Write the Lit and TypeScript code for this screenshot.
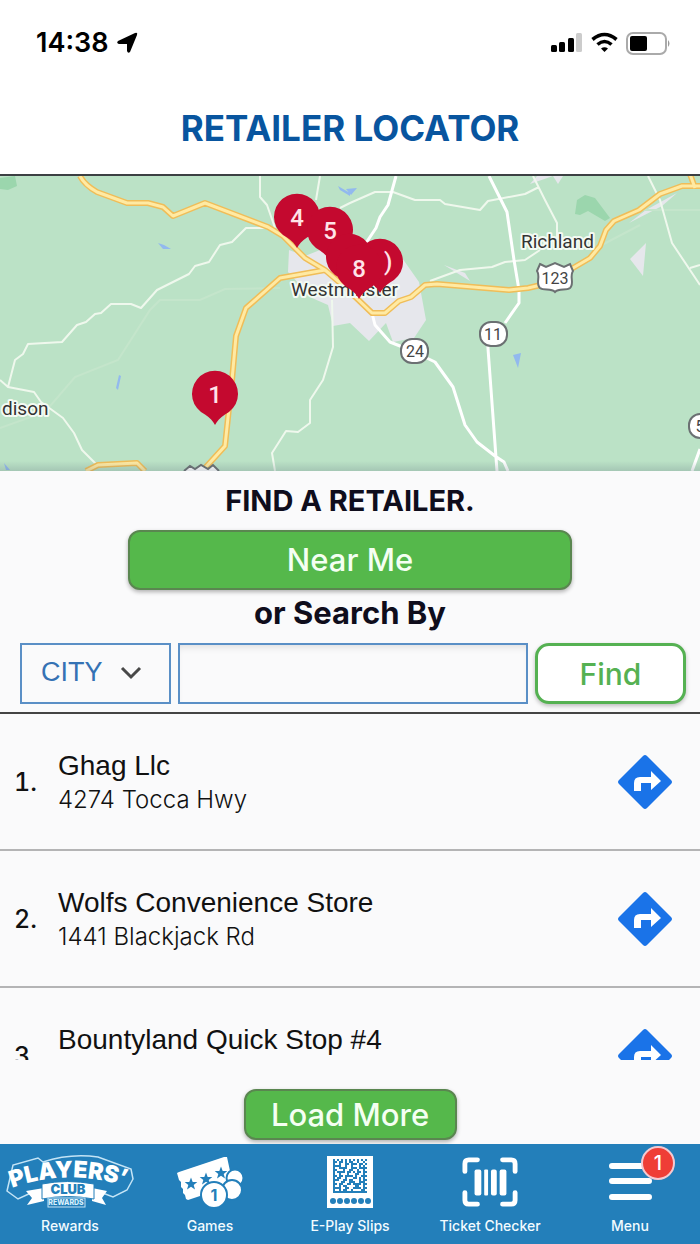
import { LitElement, html, css, svg } from "lit";
import { customElement } from "lit/decorators.js";

const stores = [
  { name: "Ghag Llc", address: "4274 Tocca Hwy" },
  { name: "Wolfs Convenience Store", address: "1441 Blackjack Rd" },
  { name: "Bountyland Quick Stop #4", address: "" },
];

const slipRows = [
  "10101010101010101",
  "11011010110010010",
  "10010011011101101",
  "11110010010001010",
  "10011110011101111",
  "11000100110010010",
  "10111101101011011",
  "10010001000110010",
  "11011011110100111",
  "10110010001101010",
  "11100110110001011",
  "10001100111001110",
  "11011001101111011",
  "10010110000110010",
  "11110011001111011",
  "10010110010000110",
  "11111111111111111",
];

const star = "M0-6.500 1.700-2 6.300-1.900 2.700.900 4 5.400 0 2.800-4 5.400-2.700.900-6.300-1.900-1.700-2Z";
const pinShape = "M0 31C-2 27-5 24-10 20.500A23 23 0 1 1 10 20.500C5 24 2 27 0 31Z";

const pin = (x: number, y: number, label: string) => svg`
  <g transform="translate(${x} ${y})">
    <path class="pin" d=${pinShape} />
    ${label ? svg`<text class="pin-label" y="9" text-anchor="middle">${label}</text>` : null}
  </g>`;

@customElement("app-map")
class AppMap extends LitElement {
  static styles = css`
    :host { display: block; background: #bbe2c6; overflow: hidden; }
    svg { display: block; width: 100%; height: 295px; }
    text { font-family: Roboto, "Liberation Sans", sans-serif; }
    .minor { fill: none; stroke: #eff8ed; stroke-width: 2; stroke-linejoin: round; }
    .faint { fill: none; stroke: #c4e5cb; stroke-width: 2; }
    .major { fill: none; stroke: #fff; stroke-width: 3; stroke-linejoin: round; }
    .casing { fill: none; stroke: #f0bd58; stroke-width: 6; stroke-linejoin: round; }
    .road { fill: none; stroke: #ffeaa3; stroke-width: 3; stroke-linejoin: round; }
    .town { fill: #e6e7ec; }
    .water { fill: #92b9ee; }
    .park { fill: #9bd6ad; }
    .place { font-size: 19px; fill: #333; stroke: #f3faf3; stroke-width: 4; stroke-linejoin: round; paint-order: stroke; }
    .shield { fill: #fff; stroke: #6b7072; stroke-width: 2; }
    .route { font-size: 16px; fill: #444; text-anchor: middle; }
    .pin { fill: #c4092f; }
    .pin-label { font-size: 24px; fill: #ffe3e8; font-weight: 500; }
    .shade { fill: url(#edge); }
  `;

  render() {
    const highways = [
      "M80 176C84 184 90 188 97 192L127 203H148L163 207 173 216 205 203 268 227 283 236 305 258 325 270 345 287 372 313H385L399 301 411 297 425 285 437 284 509 290 528 288 545 284 573 268 590 258 600 246 606 230 614 221 639 210 660 194 682 186H702",
      "M325 270 280 278 246 308 236 336 232 380 225 446 205 468",
      "M86 471 98 465 137 463 145 471",
      "M690 174 695 188",
    ];
    return html`
      <svg viewBox="0 176 700 295" preserveAspectRatio="xMidYMid slice" role="img" aria-label="Map of retailers">
        <defs>
          <linearGradient id="edge" x1="0" y1="0" x2="0" y2="1">
            <stop offset="0" stop-color="#567" stop-opacity="0" />
            <stop offset="1" stop-color="#567" stop-opacity=".22" />
          </linearGradient>
        </defs>
        <path class="park" d="M0 178 15 176 17 186 8 190 0 189ZM577 200 585 195 595 198 610 218 605 221 588 211 580 215 575 214Z" />
        <path class="town" d="M289 250 305 256 325 248 350 240 400 255 419 282 426 320 414 338 393 342 386 323 369 341 350 323 333 326 328 305 312 298 288 272Z
          M444 265 465 273 470 281ZM629 223 646 210 677 193 662 206ZM630 259 646 243 643 276ZM537 176H563L558 184 553 176 530 184Z" />
        <path class="water" d="M158 243 164 245 171 249 163 249ZM119 375 121 376 118 390 116 388ZM338 186 350 193V196L340 190ZM346 189 357 188 351 195ZM513 355 521 353 518 368ZM4 463 10 470H6Z" />
        <path class="faint" d="M0 428 45 412 75 377 118 360 150 310 160 300 200 300 225 289 280 288M640 210 700 210M600 246 640 225" />
        <path class="minor" d="M0 380 8 387 34 392 41 402 63 418 74 433 82 450 98 466M8 387 15 360 23 354 28 344 62 342 77 325 86 322 95 314 101 313 111 304H131L141 308 157 290 189 274 195 266 209 262 220 245 232 242 246 228H265
          M260 176V197L267 205 275 228M320 176 316 200M340 208 350 203 375 192H393L415 200H440L445 204 480 210 488 201 525 194 539 187M533 176 545 200 557 223V240M648 176 660 200 672 243 700 285M690 268 700 265M430 281 460 270 492 267 505 262 525 260 540 250
          M332 300 333 347 323 380 310 400V423L298 432 286 431 272 453 275 471" />
        <path class="major" d="M396 176 388 205 380 217 376 228 366 243M489 176 507 212 514 260 519 290V303L505 323M487 335 497 471M372 313 375 325 390 342 410 350 435 362 453 387 465 425 477 442 495 456 504 462 508 471M700 449 692 471" />
        ${highways.map((d) => svg`<path class="casing" d=${d} />`)}
        ${highways.map((d) => svg`<path class="road" d=${d} />`)}
        <text class="place" x="521" y="248">Richland</text>
        <text class="place" x="291" y="296">Westminster</text>
        <text class="place" x="2" y="415">dison</text>
        <g class="shield">
          <path d="M540 264 546 267 555 263 564 267 570 264 573 271C569 277 575 283 570 288 566 291 559 288 555 292 551 288 544 291 540 288 535 283 541 277 537 271Z" />
          <path d="M184 471 190 466 195 469 201 465 208 469 213 465 219 471" />
          <rect x="401" y="339" width="27" height="24" rx="11" />
          <rect x="480" y="322" width="27" height="24" rx="11" />
          <rect x="689" y="414" width="27" height="24" rx="11" />
        </g>
        <text class="route" x="555" y="284">123</text>
        <text class="route" x="415" y="357">24</text>
        <text class="route" x="493" y="340">11</text>
        <text class="route" x="700" y="432">5</text>
        <rect class="shade" x="0" y="461" width="700" height="10" />
        ${pin(297, 217, "4")}
        ${pin(330, 230, "5")}
        ${pin(349, 257, "")}
        ${pin(380, 262, "")}
        <text class="pin-label" x="384" y="270">)</text>
        ${pin(359, 268, "8")}
        ${pin(215, 394, "1")}
      </svg>`;
  }
}

@customElement("app-root")
class AppRoot extends LitElement {
  static styles = css`
    :host {
      display: flex; flex-direction: column; height: 100vh; overflow: hidden;
      background: #fafafb; color: #0f0d1c; font-family: Inter, "Liberation Sans", sans-serif;
    }
    * { box-sizing: border-box; }
    svg { display: block; overflow: visible; }
    button, input, select { font: inherit; margin: 0; cursor: pointer; }
    .top { background: #fff; border-bottom: 2px solid #3c4043; height: 176px; flex: none; }
    .status { display: flex; justify-content: space-between; align-items: center; padding: 28px 29px 0 36px; }
    .clock { display: flex; align-items: center; gap: 8px; font-size: 27px; line-height: 30px; font-weight: 600; color: #000; }
    .signals { display: flex; align-items: center; gap: 8px; }
    .title { margin: 50px 0 0; text-align: center; font-size: 35px; line-height: 40px; font-weight: 700; color: #08559f; }
    .map { flex: none; }
    .search { flex: none; display: flex; flex-direction: column; align-items: center; border-bottom: 2px solid #444; padding: 12px 0 8px; }
    .lead { margin: 0; font-size: 29px; line-height: 36px; font-weight: 700; }
    .or { font-size: 31px; }
    .primary {
      background: #55b84b; color: #f4fff2; border: 2px solid #5a8650; border-radius: 12px;
      box-shadow: 0 2px 4px rgba(0, 0, 0, .3); font-size: 31px; line-height: 36px; font-weight: 500;
    }
    .near { width: 444px; max-width: 90%; height: 60px; margin: 11px 0 5px; }
    .form { align-self: stretch; display: flex; gap: 7px; margin-top: 12px; padding: 0 14px 0 20px; }
    .pick { position: relative; width: 151px; flex: none; }
    .select {
      appearance: none; width: 100%; height: 61px; border: 2px solid #5a8fc6; border-radius: 0; background: #fafafb;
      color: #3572b4; padding: 0 0 4px 19px; font-family: "Liberation Sans", sans-serif; font-size: 27px;
    }
    .chevron { position: absolute; right: 29px; top: 23px; pointer-events: none; }
    .query { flex: 1; min-width: 0; height: 61px; border: 2px solid #5a8fc6; background: #fafafb; box-shadow: inset 0 6px 8px -5px rgba(0, 0, 0, .14); padding: 0 12px; font-size: 26px; }
    .find {
      width: 151px; flex: none; height: 61px; border: 3px solid #55b152; border-radius: 14px; background: #fff;
      color: #55b152; font-size: 30px; font-weight: 500; box-shadow: 0 2px 4px rgba(0, 0, 0, .25);
    }
    .list { flex: 1; min-height: 0; margin: 0; padding: 0; list-style: none; overflow-y: auto; scrollbar-width: none; }
    .row { display: flex; align-items: center; height: 137px; border-bottom: 2px solid #b4b4b5; padding: 0 28px 0 14px; color: #111; }
    .num { width: 44px; font-size: 25px; font-weight: 500; font-variant-numeric: tabular-nums; }
    .info { flex: 1; display: flex; flex-direction: column; gap: 2px; }
    .name { font-family: "Liberation Sans", sans-serif; font-size: 28px; line-height: 34px; }
    .address { font-size: 24px; line-height: 30px; min-height: 30px; font-weight: 300; }
    .more { flex: none; display: flex; justify-content: center; padding: 29px 0 4px; }
    .load { width: 213px; height: 51px; }
    .nav { flex: none; display: grid; grid-template-columns: repeat(5, 1fr); height: 100px; background: #237fba; }
    .tab { display: flex; flex-direction: column; align-items: center; justify-content: space-between; padding: 12px 0 8px; color: #f2fbff; text-decoration: none; font-size: 14px; line-height: 20px; font-weight: 500; }
    .badge-text { font-size: 20px; font-weight: 500; fill: #fff; }
    .ball { font-size: 16px; font-weight: 700; fill: #237fba; }
    .logo-word { font-size: 23px; font-weight: 900; fill: #fff; }
    .logo-club { font-size: 13px; font-weight: 900; fill: #237fba; }
    .logo-small { font-size: 7px; font-weight: 800; fill: #d8f0fc; }
  `;

  rewards() {
    return html`<svg width="130" height="52" viewBox="7 1156 130 52" aria-hidden="true">
      <path d="M35 1192 20 1199 9 1191 15 1165 40 1158 45 1162Q72 1153 100 1157L133 1169 135 1179 129 1190 115 1197 102 1192" fill="none" stroke="#c4e4f6" stroke-width="1.500" />
      <path id="arc" d="M14 1188Q70 1167 134 1188" fill="none" />
      <text class="logo-word"><textPath href="#arc">PLAYERS’</textPath></text>
      <path d="M28 1191 46 1188V1201L29 1205 34 1198ZM109 1191 94 1188V1201L108 1205 104 1198Z" fill="#fff" />
      <path d="M44 1184Q69 1179 96 1184V1199Q69 1194 44 1199Z" fill="#fff" stroke="#237fba" />
      <text class="logo-club" x="70" y="1194" text-anchor="middle">CLUB</text>
      <rect x="50" y="1198" width="37" height="9" fill="#237fba" stroke="#c4e4f6" />
      <text class="logo-small" x="68" y="1205" text-anchor="middle">REWARDS</text>
    </svg>`;
  }

  games() {
    return html`<svg width="68" height="52" viewBox="177 1156 68 52" aria-hidden="true">
      <path d="M178 1173 180 1172 225 1157 228 1157 234 1185 189 1200 187 1199 186 1195 184 1193 184 1189 182 1187 182 1182 180 1180Z" fill="#fff" />
      <g fill="#237fba"><path transform="translate(192 1184)" d=${star} /><path transform="translate(207 1179)" d=${star} /><path transform="translate(222 1173)" d=${star} /></g>
      <g fill="#fff" stroke="#237fba" stroke-width="2"><circle cx="236" cy="1178" r="8.500" /><circle cx="233" cy="1190" r="10" /><circle cx="215" cy="1195" r="13" /></g>
      <text class="ball" x="215" y="1201" text-anchor="middle">1</text>
    </svg>`;
  }

  slips() {
    return html`<svg width="46" height="52" viewBox="0 0 46 52" aria-hidden="true">
      <path d="M0 0H46V52H0Z" fill="#fff" />
      <g fill="#237fba" transform="translate(6 3)">
        ${slipRows.map((row, y) => [...row].map((cell, x) => (cell === "1" ? svg`<rect x=${x * 2} y=${y * 2} width="2" height="2" />` : null)))}
        ${[0, 1, 2, 3, 4, 5].map((i) => svg`<circle cx=${i * 7} cy="42" r="3" />`)}
      </g>
    </svg>`;
  }

  checker() {
    return html`<svg width="56" height="52" viewBox="0 0 58 52" aria-hidden="true">
      <path d="M3 15V7Q3 3 7 3H16M42 3H51Q55 3 55 7V15M55 37V45Q55 49 51 49H42M16 49H7Q3 49 3 45V37" fill="none" stroke="#fff" stroke-width="5" stroke-linecap="round" />
      <g fill="#fff"><rect x="13" y="13" width="7" height="27" rx="2" /><rect x="23" y="13" width="4" height="27" rx="1" /><rect x="30" y="13" width="6" height="27" rx="2" /><rect x="39" y="13" width="7" height="27" rx="2" /></g>
    </svg>`;
  }

  menu() {
    return html`<svg width="90" height="52" viewBox="585 1156 90 52" aria-hidden="true">
      <path d="M612 1166H649M612 1181H649M612 1197H649" stroke="#fff" stroke-width="6" stroke-linecap="round" />
      <circle cx="658" cy="1163" r="16" fill="#ef3d36" stroke="#f5c9d0" stroke-width="2" />
      <text class="badge-text" x="658" y="1170" text-anchor="middle">1</text>
    </svg>`;
  }

  render() {
    const tabs = [
      ["Rewards", this.rewards()],
      ["Games", this.games()],
      ["E-Play Slips", this.slips()],
      ["Ticket Checker", this.checker()],
      ["Menu", this.menu()],
    ];
    return html`
      <header class="top">
        <div class="status">
          <span class="clock">14:38
            <svg width="22" height="22" viewBox="0 0 22 22" aria-hidden="true"><path d="M19 1Q22 0 21 3L14 20Q12 22 11 19V12H3Q0 11 2 9Z" fill="#000" /></svg>
          </span>
          <span class="signals">
            <svg width="32" height="20" viewBox="0 0 32 20" aria-hidden="true"><rect x="0" y="12" width="6" height="7" rx="1.500" /><rect x="8" y="9" width="6" height="10" rx="1.500" /><rect x="17" y="5" width="6" height="14" rx="1.500" /><rect x="25" y="0" width="6" height="19" rx="1.500" fill="#ccc" /></svg>
            <svg width="27" height="20" viewBox="0 0 27 20" aria-hidden="true"><path d="M1.500 6.500Q13.500-3.500 25.500 6.500M6.500 11.500Q13.500 5.500 20.500 11.500" fill="none" stroke="#000" stroke-width="3.600" /><path d="M10 15.500Q13.500 13 17 15.500L13.500 19Z" /></svg>
            <svg width="45" height="23" viewBox="0 0 45 23" aria-hidden="true"><rect x="1" y="1" width="39" height="21" rx="6" fill="none" stroke="#aaa" stroke-width="2" /><rect x="4" y="4" width="17" height="15" rx="2" /><path d="M42 8Q45 11.500 42 15Z" fill="#999" /></svg>
          </span>
        </div>
        <h1 class="title">RETAILER LOCATOR</h1>
      </header>
      <app-map class="map"></app-map>
      <section class="search">
        <h2 class="lead">FIND A RETAILER.</h2>
        <button class="primary near" type="button">Near Me</button>
        <p class="lead or">or Search By</p>
        <form class="form" @submit=${(e: Event) => e.preventDefault()}>
          <div class="pick">
            <select class="select" aria-label="Search by"><option>CITY</option><option>ZIP</option></select>
            <svg class="chevron" width="22" height="14" viewBox="0 0 22 14" aria-hidden="true"><path d="M2 2 11 11 20 2" fill="none" stroke="#484848" stroke-width="3" /></svg>
          </div>
          <input class="query" type="text" aria-label="City" />
          <button class="find" type="submit">Find</button>
        </form>
      </section>
      <ol class="list">
        ${stores.map((s, i) => html`<li class="row">
          <span class="num">${`${i + 1}.`}</span>
          <div class="info"><span class="name">${s.name}</span><span class="address">${s.address}</span></div>
          <a href="#directions" aria-label="Directions to ${s.name}">
            <svg width="54" height="54" viewBox="0 0 54 54" aria-hidden="true">
              <path d="M25 1Q27-1 29 1L53 25Q55 27 53 29L29 53Q27 55 25 53L1 29Q-1 27 1 25Z" fill="#1a73e8" />
              <path d="M16 36V28Q16 22 22 22H33V16L43 26 33 35V28H23V36Z" fill="#fff" />
            </svg>
          </a>
        </li>`)}
      </ol>
      <div class="more"><button class="primary load" type="button">Load More</button></div>
      <nav class="nav">
        ${tabs.map(([label, icon]) => html`<a class="tab" href="#">${icon}<span>${label}</span></a>`)}
      </nav>`;
  }
}
